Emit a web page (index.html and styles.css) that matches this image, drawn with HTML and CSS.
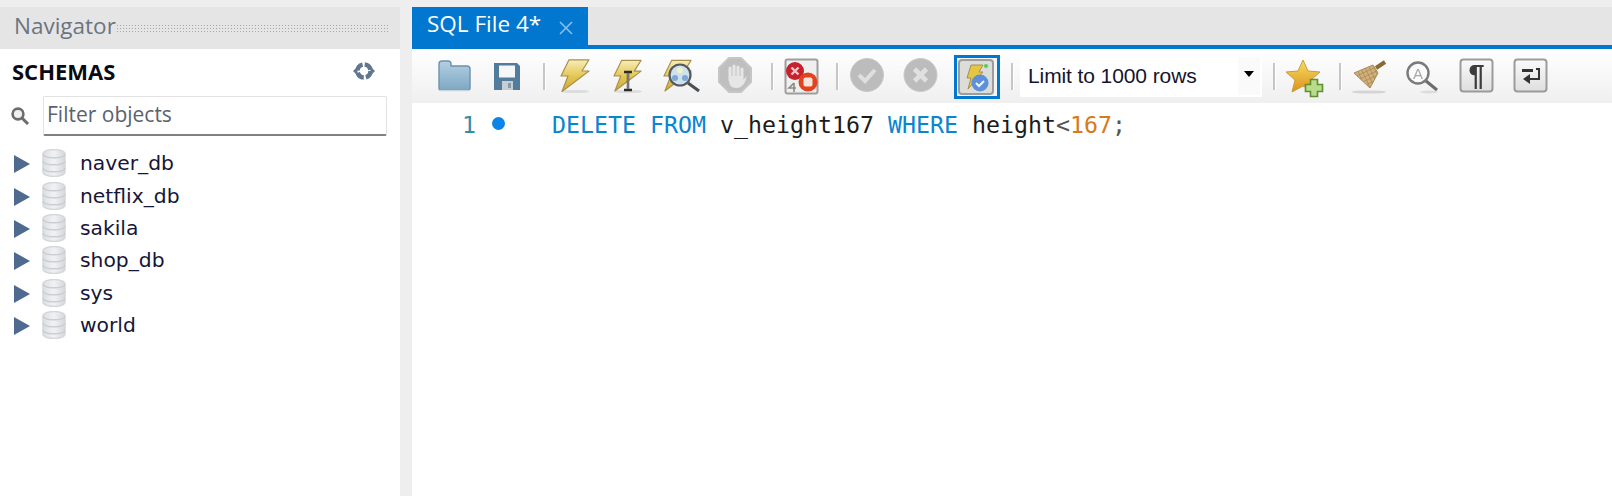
FILE: index.html
```html
<!DOCTYPE html>
<html lang="en">
<head>
<meta charset="utf-8">
<title>MySQL Workbench</title>
<link rel="stylesheet" href="styles.css">
</head>
<body>
<svg class="defs" width="0" height="0" aria-hidden="true">
  <defs>
    <linearGradient id="gBolt" x1="0" y1="0" x2="0" y2="1"><stop offset="0" stop-color="#f6eeb8"/><stop offset=".55" stop-color="#e3c44e"/><stop offset="1" stop-color="#cfa93a"/></linearGradient>
    <linearGradient id="gFolder" x1="0" y1="0" x2="0" y2="1"><stop offset="0" stop-color="#b4cfe2"/><stop offset="1" stop-color="#7fa8c4"/></linearGradient>
    <linearGradient id="gDb" x1="0" y1="0" x2="1" y2="0"><stop offset="0" stop-color="#dcdee2"/><stop offset=".5" stop-color="#f1f2f4"/><stop offset="1" stop-color="#d5d7db"/></linearGradient>
    <linearGradient id="gKey" x1="0" y1="0" x2="0" y2="1"><stop offset="0" stop-color="#fafafa"/><stop offset="1" stop-color="#dedede"/></linearGradient>
    <linearGradient id="gStar" x1="0" y1="0" x2="0" y2="1"><stop offset="0" stop-color="#f8dc60"/><stop offset="1" stop-color="#dc921e"/></linearGradient>
    <pattern id="pBroom" width="4" height="4" patternUnits="userSpaceOnUse" patternTransform="rotate(-25)"><rect width="4" height="4" fill="#d2b27a"/><path d="M0 0H4M0 0V4" stroke="#94784a" stroke-width="1"/></pattern>
    <symbol id="db" viewBox="0 0 24 28">
      <path d="M1 5c0-6 22-6 22 0v18c0 6-22 6-22 0z" fill="url(#gDb)" stroke="#d4d6da" stroke-width="1.4"/>
      <path d="M1 5c0 5 22 5 22 0M1 12c0 5 22 5 22 0M1 19c0 5 22 5 22 0" fill="none" stroke="#cbcdd1" stroke-width="1.4"/>
    </symbol>
    <symbol id="bolt" viewBox="0 0 30 33">
      <path d="M9 .8H29L22 12h7L2 32.5 8 17H1z" fill="url(#gBolt)" stroke="#a8904e" stroke-width="1.2" stroke-linejoin="round"/>
    </symbol>
  </defs>
</svg>

<div class="app">
  <aside class="nav">
    <header class="nav-head"><span class="nav-title">Navigator</span><span class="grip"></span></header>
    <div class="schemas-head">
      <strong class="schemas-title">SCHEMAS</strong>
      <svg class="refresh" width="24" height="20" viewBox="0 0 24 20">
        <circle cx="12" cy="10" r="6.500" fill="none" stroke="#60778f" stroke-width="4.500" stroke-dasharray="8 2.200"/>
        <path d="M1 10l4.500-4.500v9zM23 10l-4.500-4.500v9z" fill="#60778f"/>
      </svg>
    </div>
    <div class="filter">
      <svg class="search" width="20" height="20" viewBox="0 0 20 20">
        <circle cx="8" cy="8" r="5.400" fill="#eef0f2" stroke="#6c6c6c" stroke-width="2.600"/>
        <path d="M12 12l6 6" stroke="#6c6c6c" stroke-width="3"/>
      </svg>
      <div class="filter-input">Filter objects</div>
    </div>
    <ul class="tree">
      <li class="tree-row"><span class="caret"></span><svg class="db-icon"><use href="#db"/></svg><span>naver_db</span></li>
      <li class="tree-row"><span class="caret"></span><svg class="db-icon"><use href="#db"/></svg><span>netflix_db</span></li>
      <li class="tree-row"><span class="caret"></span><svg class="db-icon"><use href="#db"/></svg><span>sakila</span></li>
      <li class="tree-row"><span class="caret"></span><svg class="db-icon"><use href="#db"/></svg><span>shop_db</span></li>
      <li class="tree-row"><span class="caret"></span><svg class="db-icon"><use href="#db"/></svg><span>sys</span></li>
      <li class="tree-row"><span class="caret"></span><svg class="db-icon"><use href="#db"/></svg><span>world</span></li>
    </ul>
  </aside>

  <main class="main">
    <div class="tabs">
      <div class="tab">
        <span class="tab-label">SQL File 4*</span>
        <svg class="tab-close" width="16" height="16" viewBox="0 0 16 16"><path d="M2 2l12 12M14 2L2 14" stroke="#86c0ec" stroke-width="1.600"/></svg>
      </div>
    </div>

    <div class="toolbar">
      <svg class="tool" viewBox="0 0 53 54">
        <path d="M11 39V15q0-3 3-3h6q3 0 3 3v2h16q3 0 3 3v19q0 2-2 2H13q-2 0-2-2z" fill="url(#gFolder)" stroke="#6a93ae" stroke-width="1.400"/>
        <path d="M12 41.500h29" stroke="#c9d3da" stroke-width="1.400"/>
      </svg>
      <svg class="tool" viewBox="0 0 53 54">
        <path d="M13 14h23l3 3v24H13z" fill="#527c9b"/>
        <rect x="18" y="16.500" width="16" height="12" fill="#f4f6f8"/>
        <rect x="21" y="32" width="11" height="9" fill="#c6ced4"/>
        <rect x="27" y="34" width="3" height="5" fill="#8d9aa3"/>
      </svg>
      <span class="sep sep-9"></span>
      <svg class="tool" viewBox="0 0 53 54">
        <ellipse cx="27" cy="42.500" rx="14" ry="1.600" fill="#dcdcdc"/>
        <use href="#bolt" x="12" y="10" width="30" height="33"/>
      </svg>
      <svg class="tool" viewBox="0 0 53 54">
        <ellipse cx="27" cy="42.500" rx="14" ry="1.600" fill="#dcdcdc"/>
        <use href="#bolt" x="12" y="10" width="29" height="33"/>
        <path d="M23 23h8M23 41h8M27 23v18" stroke="#2b2b2b" stroke-width="2.400" fill="none"/>
        <path d="M27 24v16" stroke="#e8e8e8" stroke-width=".8"/>
      </svg>
      <svg class="tool" viewBox="0 0 53 54">
        <use href="#bolt" x="9" y="10" width="29" height="33"/>
        <circle cx="26" cy="26" r="10.500" fill="#cfe0ee" stroke="#55595e" stroke-width="2.200"/>
        <circle cx="26" cy="21.500" r="3" fill="#eef2c8"/><circle cx="21" cy="29" r="3" fill="#7ea6d6"/><circle cx="31" cy="29" r="3" fill="#7ea6d6"/>
        <path d="M34 34l11 8" stroke="#4c4f54" stroke-width="3"/>
      </svg>
      <svg class="tool" viewBox="0 0 53 54">
        <path d="M22 9h12l10 10v14L34 43H22L12 33V19z" fill="#bfbfbf" stroke="#c6c6c6" stroke-width="2" stroke-linejoin="round"/>
        <path d="M23 19v12M27 17v12M31 18v12M35 20v12" stroke="#e6e6e6" stroke-width="3" stroke-linecap="round"/>
        <path d="M22 27h14v4l4-4-2 6q-3 6-9 6-7 0-7-8z" fill="#e6e6e6"/>
      </svg>
      <span class="sep sep-11"></span>
      <svg class="tool" viewBox="0 0 53 54">
        <rect x="11.500" y="10.500" width="32" height="34" rx="2" fill="#efefef" stroke="#9e9e9e" stroke-width="2"/>
        <path d="M20 34l-5 5h7M20 34v9" fill="none" stroke="#8a8a8a" stroke-width="1.600"/>
        <circle cx="21" cy="22" r="9" fill="#c8202f"/>
        <path d="M17.500 18.500l7 7M24.500 18.500l-7 7" stroke="#f4c6c9" stroke-width="2.400"/>
        <circle cx="34" cy="33" r="9.500" fill="#e2431f"/>
        <rect x="29.500" y="28.500" width="9" height="9" rx="2" fill="#f5e4de"/>
      </svg>
      <span class="sep sep-9"></span>
      <svg class="tool" viewBox="0 0 53 54">
        <circle cx="26" cy="26" r="16.500" fill="#bcbcbc" stroke="#c8c8c8"/>
        <path d="M18 26l6 6 10-11" fill="none" stroke="#dfdfdf" stroke-width="4"/>
      </svg>
      <svg class="tool" viewBox="0 0 53 54">
        <circle cx="26.500" cy="26" r="16.500" fill="#bcbcbc" stroke="#c8c8c8"/>
        <path d="M20.500 20l12 12M32.500 20l-12 12" stroke="#e0e0e0" stroke-width="4.600"/>
      </svg>
      <div class="tool-active">
        <svg class="active-icon" viewBox="0 0 36 36">
          <rect x="1" y="1" width="34" height="34" rx="3" fill="#dcdcd8" stroke="#9c9c9c" stroke-width="2"/>
          <path d="M13 6h12l-4 7h4L10 30l3-11H9z" fill="#e4c544" stroke="#a8904e"/>
          <circle cx="28" cy="7" r="2" fill="#4fd14f"/>
          <circle cx="22" cy="24" r="8.500" fill="#5c90da"/>
          <path d="M18 24l3 3 5-5" fill="none" stroke="#f2f6fc" stroke-width="2"/>
        </svg>
      </div>
      <span class="sep sep-11"></span>
      <div class="limit">
        <span class="limit-text">Limit to 1000 rows</span>
        <span class="limit-btn"><span class="limit-arrow"></span></span>
      </div>
      <span class="sep sep-11"></span>
      <svg class="tool" viewBox="0 0 53 54">
        <path d="M23 11l5 11 12 1-9 8 3 12-11-6-11 6 3-12-9-8 12-1z" fill="url(#gStar)" stroke="#c99a3a" stroke-linejoin="round"/>
        <path d="M30.500 30.500h7v5h5v7h-5v5h-7v-5h-5v-7h5z" fill="#b8dc8c" stroke="#5f8f2e" stroke-width="1.600"/>
      </svg>
      <span class="sep sep-6"></span>
      <svg class="tool" viewBox="0 0 53 54">
        <ellipse cx="22" cy="43" rx="17" ry="1.600" fill="#d4d4d4"/>
        <path d="M7 24L26 16l5 8-8 15z" fill="url(#pBroom)" stroke="#a98a52"/>
        <path d="M29 19l9-6" stroke="#8a6a30" stroke-width="4"/>
      </svg>
      <svg class="tool" viewBox="0 0 53 54">
        <ellipse cx="29" cy="43" rx="9" ry="1.500" fill="#dcdcdc"/>
        <circle cx="18" cy="24" r="10.500" fill="#fbfbfb" stroke="#7a7a7a" stroke-width="2.400"/>
        <text class="mag-letter" x="18" y="30">A</text>
        <path d="M26 32l11 9" stroke="#6c6c6c" stroke-width="3"/>
      </svg>
      <svg class="tool" viewBox="0 0 53 54">
        <rect x="7.500" y="10.500" width="32" height="32" rx="3" fill="url(#gKey)" stroke="#9b9b9b" stroke-width="2"/>
        <text class="pilcrow" x="23.500" y="36">¶</text>
      </svg>
      <svg class="tool" viewBox="0 0 53 54">
        <rect x="8.500" y="10.500" width="32" height="32" rx="3" fill="url(#gKey)" stroke="#9b9b9b" stroke-width="2"/>
        <path d="M16 20h11v3H16z" fill="#333"/>
        <path d="M30 20h3v10H22" fill="none" stroke="#333" stroke-width="2"/>
        <path d="M24 25v10l-7-5z" fill="#333"/>
      </svg>
    </div>

    <div class="editor">
      <span class="line-no">1</span>
      <span class="dot"></span>
      <code class="code"><span class="kw">DELETE FROM</span> v_height167 <span class="kw">WHERE</span> height<span class="op">&lt;</span><span class="num">167</span><span class="op">;</span></code>
    </div>
  </main>
</div>
</body>
</html>
```

FILE: styles.css
```css
* { box-sizing: border-box; }
html, body { margin: 0; height: 100%; }
body { background: #eeeeef; padding-top: 7px; overflow: hidden; }
.defs { position: absolute; }
.app { display: grid; grid-template-columns: 400px 1fr; column-gap: 12px; height: 489px; }

.nav { background: #fff; display: flex; flex-direction: column; }
.nav-head { height: 42px; background: #e5e5e5; display: flex; align-items: center; padding: 0 10px 0 14px; }
.nav-title { font: 22.5px/30px "Open Sans", sans-serif; color: #6c7480; margin-top: -5px; }
.grip { flex: 1; height: 9px; background-image: radial-gradient(circle, #a8a8a8 .75px, transparent .9px); background-size: 3px 3px; }
.schemas-head { height: 40px; display: flex; align-items: center; justify-content: space-between; padding: 3px 24px 0 12px; }
.schemas-title { font: bold 22px/30px "Open Sans", sans-serif; color: #0a0a14; }
.filter { display: flex; align-items: center; height: 40px; margin-top: 7px; padding: 0 13px 0 10px; gap: 13px; }
.search { flex: none; }
.filter-input { flex: 1; height: 40px; border: 1px solid #e2e2e2; border-bottom: 2px solid #808080; border-radius: 2px; padding-left: 3px; font: 21px/35px "Open Sans", sans-serif; color: #5a6270; }
.tree { list-style: none; margin: 11px 0 0; padding: 0; font: 20.3px "DejaVu Sans", sans-serif; color: #16163a; }
.tree-row { display: flex; align-items: center; height: 32.4px; padding-left: 14px; }
.caret { width: 0; height: 0; border-left: 16px solid #4e6a8f; border-top: 9px solid transparent; border-bottom: 9px solid transparent; margin-top: 2px; }
.db-icon { width: 24px; height: 28px; margin: 0 14px 0 12px; }

.main { background: #fff; display: flex; flex-direction: column; }
.tabs { height: 42px; background: #e5e5e5; border-bottom: 4px solid #0277cf; display: flex; }
.tab { width: 176px; background: #0277cf; display: flex; align-items: center; padding: 0 14px 4px 15px; justify-content: space-between; }
.tab-label { font: 22.5px/30px "Open Sans", sans-serif; color: #fff; white-space: nowrap; }
.tab-close { margin-top: 8px; flex: none; }

.toolbar { height: 54px; background: linear-gradient(#ffffff, #efefef); padding-left: 16px; display: grid; grid-auto-flow: column; align-items: start; justify-content: start;
  grid-template-columns: 53px 53px 14px 53px 53px 53px 53px 14px 53px 14px 53px 53px 53px 20px 242px 18px 53px 14px 53px 53px 53px 53px; }
.tool { width: 53px; height: 54px; display: block; filter: blur(.35px); }
.sep { display: block; width: 3px; height: 27px; margin-top: 14px; border-left: 2px solid #c6c6c6; border-right: 1px solid #fff; justify-self: start; }
.sep-6 { margin-left: 6px; }
.sep-9 { margin-left: 9px; }
.sep-11 { margin-left: 11px; }
.tool-active { justify-self: end; width: 46px; height: 44px; margin-top: 6px; border: 3px solid #0277cf; padding: 1px 0 0 1px; background: #f4f4f4; }
.active-icon { display: block; width: 36px; height: 36px; filter: blur(.35px); }
.limit { height: 42px; margin-top: 6px; background: #fff; display: flex; align-items: center; justify-content: space-between; padding: 2px 2px 2px 8px; }
.limit-text { font: 21px/28px "Liberation Sans", sans-serif; color: #14142e; letter-spacing: -.1px; white-space: nowrap; }
.limit-btn { width: 22px; height: 38px; background: #fafafa; display: flex; align-items: center; justify-content: center; }
.limit-arrow { width: 0; height: 0; border-top: 6px solid #000; border-left: 5px solid transparent; border-right: 5px solid transparent; margin-bottom: 4px; }
.mag-letter { font: 15px "Liberation Sans", sans-serif; fill: #a8a8a8; text-anchor: middle; }
.pilcrow { font: bold 29px "Liberation Sans", sans-serif; fill: #3c3c3c; text-anchor: middle; }

.editor { flex: 1; display: flex; align-items: flex-start; padding-top: 8px; font: 23.25px/28px "DejaVu Sans Mono", monospace; }
.line-no { margin-left: 50px; width: 14px; color: #3b8aa8; }
.dot { width: 13px; height: 13px; border-radius: 50%; background: #0a84e8; margin: 6px 0 0 16px; }
.code { margin-left: 47px; font: inherit; color: #1c1c1c; white-space: pre; }
.kw { color: #0a85cf; }
.num { color: #d67a1c; }
.op { color: #555; }
```
